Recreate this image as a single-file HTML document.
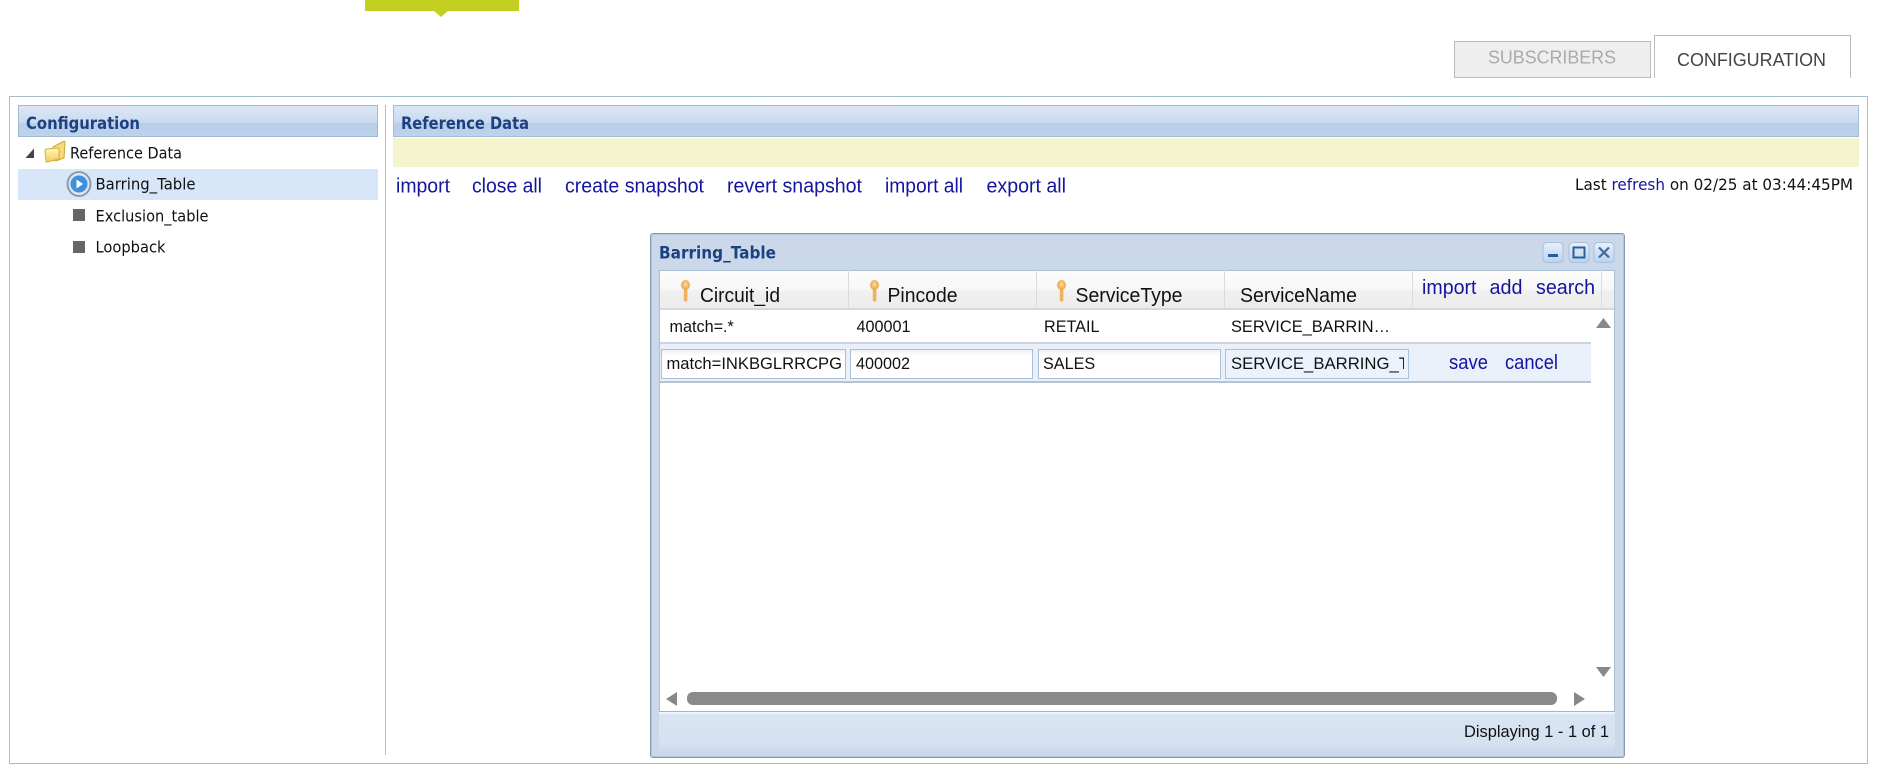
<!DOCTYPE html>
<html lang="en"><head><meta charset="utf-8"><title>Configuration</title>
<style>
html,body{margin:0;padding:0;width:1888px;height:782px;overflow:hidden;background:#fff}
.b{position:absolute;box-sizing:border-box}
.hd{background:linear-gradient(#dbe7f6 0,#c9daef 56%,#b7cde9 58%,#bfd2ec 100%);border:1px solid #a3bad4;height:32px;top:105px}
.inp{background:linear-gradient(#f0f0f0,#fff 20%);border:1px solid #abc0d6;height:30px;top:349px}
.sep{width:1px;background:#d9dcdf;top:270px;height:40px}
svg{position:absolute;left:0;top:0}
text{font-family:"Liberation Sans",Arial,sans-serif;fill:#111}
.t{font-family:"DejaVu Sans",sans-serif;font-size:16px;fill:#111}
.h{font-family:"DejaVu Sans",sans-serif;font-weight:bold;font-size:17px;fill:#1b4181}
.l{font-size:20px;fill:#1414a0}
.c{font-size:20px;fill:#111}
.r{font-size:16.2px;fill:#111}
</style></head><body>
<div class="b" style="left:365px;top:0;width:154px;height:11px;background:#c3d021"></div>
<div class="b" style="left:1454px;top:41px;width:197px;height:37px;background:#eee;border:1px solid #bbb"></div>
<div class="b" style="left:1654px;top:35px;width:197px;height:43px;background:#fff;border:1px solid #bbb;border-bottom:0"></div>
<div class="b" style="left:9px;top:96px;width:1859px;height:668px;border:1px solid #a6bfcf;background:#fff"></div>
<div class="b hd" style="left:18px;width:360px"></div>
<div class="b" style="left:385px;top:105px;width:1px;height:650px;background:#a9c0d3"></div>
<div class="b hd" style="left:393px;width:1466px"></div>
<div class="b" style="left:393px;top:138px;width:1466px;height:29px;background:#f4f4cf"></div>
<div class="b" style="left:18px;top:169px;width:360px;height:31px;background:#d8e6f9"></div>
<div class="b" style="left:73px;top:209px;width:12px;height:12px;background:#666"></div>
<div class="b" style="left:73px;top:241px;width:12px;height:12px;background:#666"></div>

<div class="b" style="left:650px;top:233px;width:975px;height:525px;border:1px solid #8599ae;border-radius:3px;background:#cad8ea;box-shadow:inset 0 0 0 1px #b4c7dc"></div>
<div class="b" style="left:659px;top:270px;width:956px;height:442px;background:#fff;border:1px solid #a9bfd6;border-bottom:0"></div>
<div class="b" style="left:660px;top:271px;width:954px;height:39px;background:linear-gradient(#fcfcfc 0,#f7f7f7 50%,#f0f0f0 55%,#ececec 100%);border-bottom:2px solid #d6d8db"></div>
<div class="b sep" style="left:848px"></div><div class="b sep" style="left:1036px"></div><div class="b sep" style="left:1224px"></div><div class="b sep" style="left:1412px"></div><div class="b sep" style="left:1601px"></div>
<div class="b" style="left:660px;top:342px;width:931px;height:41px;background:#e9f0fa;border-top:2px solid #ccd4dd;border-bottom:2px solid #b9c3cf"></div>
<div class="b inp" style="left:661px;width:185px"></div>
<div class="b inp" style="left:850px;width:183px"></div>
<div class="b inp" style="left:1038px;width:183px"></div>
<div class="b inp" style="left:1225px;width:184px;background:#ecf2fb"></div>
<div class="b" style="left:659px;top:711px;width:956px;height:3px;background:linear-gradient(#9db6c9,#9db6c9 1px,#eef4fa 1px)"></div>
<div class="b" style="left:659px;top:714px;width:956px;height:41px;background:linear-gradient(#d7e4f4,#d5e2f2 70%,#c8d6e8)"></div>
<div class="b" style="left:687px;top:692px;width:870px;height:13px;background:#8a8a8a;border-radius:6px"></div>

<svg width="1888" height="782" viewBox="0 0 1888 782">
<defs>
<linearGradient id="f" x1="0" y1="0" x2="0" y2="1"><stop offset="0" stop-color="#fff6c0"/><stop offset="1" stop-color="#f2cf55"/></linearGradient>
<linearGradient id="bt" x1="0" y1="0" x2="0" y2="1"><stop offset="0" stop-color="#e8f1fb"/><stop offset="1" stop-color="#bcd2ee"/></linearGradient>
<radialGradient id="kh" cx=".5" cy=".45" r=".55"><stop offset="0" stop-color="#f9dca2"/><stop offset=".55" stop-color="#f2bb66"/><stop offset="1" stop-color="#eaa548"/></radialGradient>
<g id="key"><path d="M2.800 9h3.600v11.500l-1.500 1.500-2.100-1.500z" fill="#eeb35c"/><ellipse cx="4.500" cy="5" rx="4.500" ry="5" fill="url(#kh)"/></g>
<clipPath id="cl"><rect x="1226" y="350" width="178" height="28"/></clipPath>
</defs>
<path d="M434 11h14l-7 6z" fill="#c3d021"/>
<path d="M34 148.500v9.500H25.500z" fill="#444"/>
<path d="M53 147l11-6q1 0 1 2l-1 15-8 3-3-1z" fill="#f5da78" stroke="#cfa83a"/>
<path d="M45 151q0-2 2-2l11-1q1 0 1 2l0 9-12 3q-1 0-1-1z" fill="url(#f)" stroke="#d2ac3c"/>
<ellipse cx="79" cy="184" rx="11.500" ry="12" fill="#d9e5f2" stroke="#8b959f" stroke-width="1.800"/>
<circle cx="79" cy="184" r="8.500" fill="#3e90dc"/><path d="M76.500 179.500l6.500 4.500-6.500 4.500z" fill="#fff"/>

<g transform="translate(681 280)"><use href="#key"/></g>
<g transform="translate(870 280)"><use href="#key"/></g>
<g transform="translate(1057 280)"><use href="#key"/></g>

<rect x="1543" y="242.500" width="20" height="20" rx="4" fill="url(#bt)" stroke="#a6bfdc"/><rect x="1548" y="254" width="10" height="3" fill="#2b5c9b"/>
<rect x="1569" y="242.500" width="20" height="20" rx="4" fill="url(#bt)" stroke="#a6bfdc"/><rect x="1573.500" y="247.500" width="11" height="10" fill="none" stroke="#2b5c9b" stroke-width="2"/>
<rect x="1594" y="242.500" width="20" height="20" rx="4" fill="url(#bt)" stroke="#a6bfdc"/><path d="M1599 247.500l10 10m0-10l-10 10" stroke="#3f6aa2" stroke-width="2.200"/>

<path d="M1596 328l7.500-10 7.500 10z" fill="#888"/>
<path d="M1596 667h15l-7.500 10z" fill="#888"/>
<path d="M677 692v14l-11-7z" fill="#888"/>
<path d="M1574 692v14l11-7z" fill="#888"/>

<text x="1488" y="63.500" font-size="18" style="fill:#aaa" textLength="128" lengthAdjust="spacingAndGlyphs">SUBSCRIBERS</text>
<text x="1677" y="66" font-size="18.500" style="fill:#444" textLength="149" lengthAdjust="spacingAndGlyphs">CONFIGURATION</text>

<text class="h" x="26" y="129" textLength="114" lengthAdjust="spacingAndGlyphs">Configuration</text>
<text class="h" x="401" y="129" textLength="128" lengthAdjust="spacingAndGlyphs">Reference Data</text>

<text class="t" x="70" y="158.500" textLength="112" lengthAdjust="spacingAndGlyphs">Reference Data</text>
<text class="t" x="95.500" y="189.500" textLength="100" lengthAdjust="spacingAndGlyphs">Barring_Table</text>
<text class="t" x="95.500" y="221.500" textLength="113" lengthAdjust="spacingAndGlyphs">Exclusion_table</text>
<text class="t" x="95.500" y="252.500" textLength="70" lengthAdjust="spacingAndGlyphs">Loopback</text>

<text class="l" x="396" y="192.500" textLength="54" lengthAdjust="spacingAndGlyphs">import</text>
<text class="l" x="472" y="192.500" textLength="70" lengthAdjust="spacingAndGlyphs">close all</text>
<text class="l" x="565" y="192.500" textLength="139" lengthAdjust="spacingAndGlyphs">create snapshot</text>
<text class="l" x="727" y="192.500" textLength="135" lengthAdjust="spacingAndGlyphs">revert snapshot</text>
<text class="l" x="885" y="192.500" textLength="78" lengthAdjust="spacingAndGlyphs">import all</text>
<text class="l" x="986.500" y="192.500" textLength="79.500" lengthAdjust="spacingAndGlyphs">export all</text>

<text class="t" x="1575" y="190" textLength="278" lengthAdjust="spacingAndGlyphs">Last <tspan style="fill:#1414a0">refresh</tspan> on 02/25 at 03:44:45PM</text>

<text class="h" x="659" y="258.500" textLength="117" lengthAdjust="spacingAndGlyphs">Barring_Table</text>

<text class="c" x="700" y="302" textLength="80" lengthAdjust="spacingAndGlyphs">Circuit_id</text>
<text class="c" x="887.500" y="302" textLength="70" lengthAdjust="spacingAndGlyphs">Pincode</text>
<text class="c" x="1075.500" y="302" textLength="107" lengthAdjust="spacingAndGlyphs">ServiceType</text>
<text class="c" x="1240" y="302" textLength="117" lengthAdjust="spacingAndGlyphs">ServiceName</text>

<text class="l" x="1422" y="294" textLength="54.500" lengthAdjust="spacingAndGlyphs">import</text>
<text class="l" x="1489.500" y="294" textLength="33" lengthAdjust="spacingAndGlyphs">add</text>
<text class="l" x="1536" y="294" textLength="59" lengthAdjust="spacingAndGlyphs">search</text>

<text class="r" x="669.500" y="332">match=.*</text>
<text class="r" x="856.500" y="332">400001</text>
<text class="r" x="1044" y="332">RETAIL</text>
<text class="r" x="1231" y="332" textLength="159" lengthAdjust="spacingAndGlyphs">SERVICE_BARRIN…</text>

<text class="r" x="666.500" y="369" textLength="175.500" lengthAdjust="spacingAndGlyphs">match=INKBGLRRCPG</text>
<text class="r" x="856" y="369">400002</text>
<text class="r" x="1043" y="369">SALES</text>
<g clip-path="url(#cl)"><text class="r" x="1231" y="369" textLength="178" lengthAdjust="spacingAndGlyphs">SERVICE_BARRING_T</text></g>

<text class="l" x="1449" y="369" textLength="39" lengthAdjust="spacingAndGlyphs">save</text>
<text class="l" x="1505" y="369" textLength="53" lengthAdjust="spacingAndGlyphs">cancel</text>

<text class="r" x="1464" y="737" textLength="145" lengthAdjust="spacingAndGlyphs">Displaying 1 - 1 of 1</text>
</svg>
</body></html>
